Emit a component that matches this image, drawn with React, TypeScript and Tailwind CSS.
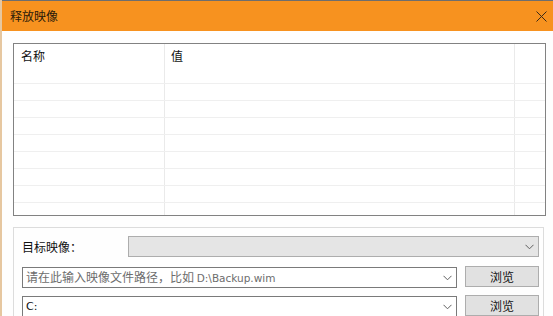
import React from "react";

const cjk = { fontFamily: '"Noto Sans CJK SC", "Microsoft YaHei", sans-serif' };

function Chevron() {
  return (
    <svg width="9" height="6" viewBox="0 0 9 6" className="shrink-0">
      <path d="M0.5 0.8 L4.5 4.8 L8.5 0.8" fill="none" stroke="#606060" strokeWidth="1" />
    </svg>
  );
}

export default function App() {
  const rows = Array.from({ length: 8 });
  return (
    <div
      className="w-[553px] h-[316px] overflow-hidden bg-white flex flex-col border-l-2 border-[#e6c7a0] text-[12px] text-[#111]"
      style={cjk}
    >
      {/* title bar */}
      <div className="h-[31px] shrink-0 border-t border-[#6e6e6e] bg-[#f7921f] flex items-center justify-between pl-[8px] pr-[6px]">
        <span className="text-[12px] text-[#2a1a0a] leading-none">释放映像</span>
        <svg width="11" height="11" viewBox="0 0 11 11">
          <path d="M0.5 0.5 L10.5 10.5 M10.5 0.5 L0.5 10.5" stroke="#3a2a1a" strokeWidth="1" />
        </svg>
      </div>

      {/* body */}
      <div className="flex-1 pl-[11px] pr-[6px] pt-[12px] flex flex-col bg-[#fefefe]">
        {/* list view */}
        <div className="h-[173px] w-[533px] border border-[#828282] bg-white overflow-hidden">
          <div className="grid grid-cols-[151px_350px_1fr] h-[23px]">
            <div className="border-r border-[#eaeaea] pl-[7px] flex items-center">名称</div>
            <div className="border-r border-[#eaeaea] pl-[6px] flex items-center">值</div>
            <div />
          </div>
          {rows.map((_, i) => (
            <div key={i} className="grid grid-cols-[151px_350px_1fr] h-[17px] border-b border-[#efefef]">
              <div className="border-r border-[#eaeaea]" />
              <div className="border-r border-[#eaeaea]" />
              <div />
            </div>
          ))}
          <div className="grid grid-cols-[151px_350px_1fr] h-[20px]">
            <div className="border-r border-[#eaeaea]" />
            <div className="border-r border-[#eaeaea]" />
            <div />
          </div>
        </div>

        {/* group box */}
        <div className="mt-[11px] w-[531px] flex-1 border-t border-l border-r border-[#dcdcdc] pl-[8px] pt-[8px] flex flex-col">
          <div className="flex items-center h-[21px]">
            <span className="w-[106px]">目标映像：</span>
            <div className="w-[411px] h-[21px] bg-[#e5e5e5] border border-[#adadad] flex items-center justify-end pr-[4px]">
              <Chevron />
            </div>
          </div>
          <div className="flex items-start mt-[10px] gap-[8px]">
            <div className="w-[435px] h-[21px] bg-white border border-[#7a7a7a] flex items-center justify-between pl-[3px] pr-[4px]">
              <span className="text-[#6d6d6d] leading-none">
                请在此输入映像文件路径，比如{" "}
                <span className="text-[11px]" style={{ fontFamily: '"DejaVu Sans", sans-serif', fontSize: "10.5px" }}>
                  D:\Backup.wim
                </span>
              </span>
              <Chevron />
            </div>
            <div className="w-[74px] h-[21px] -mt-[1px] bg-[#e1e1e1] border border-[#adadad] flex items-center justify-center leading-none">
              浏览
            </div>
          </div>
          <div className="flex items-start mt-[8px] gap-[8px]">
            <div className="w-[435px] h-[21px] bg-white border border-[#7a7a7a] flex items-center justify-between pl-[3px] pr-[4px]">
              <span className="leading-none" style={{ fontFamily: '"DejaVu Sans", sans-serif', fontSize: "11px" }}>
                C:
              </span>
              <Chevron />
            </div>
            <div className="w-[74px] h-[21px] -mt-[1px] bg-[#e1e1e1] border border-[#adadad] flex items-center justify-center leading-none">
              浏览
            </div>
          </div>
        </div>
      </div>
    </div>
  );
}
